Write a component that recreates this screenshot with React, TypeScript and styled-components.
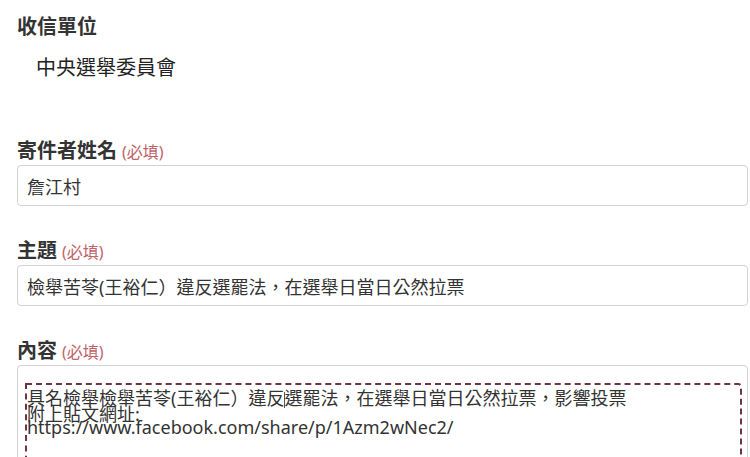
import styled, { createGlobalStyle } from "styled-components";

const GlobalStyle = createGlobalStyle`
  html, body {
    margin: 0;
    padding: 0;
    background: #fff;
    overflow: hidden;
  }
  body {
    font-family: "Noto Sans", "Noto Sans CJK TC", sans-serif;
    color: #222;
  }
`;

const Page = styled.div`
  padding: 13px 2px 0 17px;
  width: 750px;
  box-sizing: border-box;
`;

const SectionTitle = styled.h2`
  margin: 0;
  font-size: 20px;
  line-height: 28px;
  font-weight: 700;
  color: #333;
`;

const Recipient = styled.p`
  margin: 13px 0 0 19px;
  font-size: 20px;
  line-height: 28px;
  color: #222;
`;

const Field = styled.div<{ $gap: number }>`
  margin-top: ${({ $gap }) => $gap}px;
  display: flex;
  flex-direction: column;
`;

const Label = styled.label`
  display: flex;
  align-items: baseline;
  font-size: 20px;
  line-height: 26px;
  font-weight: 700;
  color: #333;
`;

const Required = styled.span`
  margin-left: 5px;
  font-size: 16px;
  font-weight: 400;
  color: #c0646a;
`;

const TextInput = styled.div`
  height: 41px;
  box-sizing: border-box;
  border: 1px solid #d2d2d2;
  border-radius: 4px;
  padding: 0 9px;
  display: flex;
  align-items: center;
  font-size: 18px;
  color: #333;
`;

const TextArea = styled.div`
  height: 120px;
  box-sizing: border-box;
  border: 1px solid #d2d2d2;
  border-radius: 4px;
  padding: 17px 5px 0 7px;
`;

const EditZone = styled.div`
  height: 100%;
  border: 2px dashed #6e3446;
  border-bottom: none;
  border-top-right-radius: 4px;
  padding: 7px 0 0 0;
  font-size: 18px;
  line-height: 13px;
  color: #333;
`;

const Line = styled.div`
  white-space: nowrap;
`;

const Caret = styled.span`
  display: inline-block;
  width: 1px;
  height: 16px;
  margin-right: -1px;
  background: #555;
  vertical-align: -3px;
`;

export default function App() {
  return (
    <>
      <GlobalStyle />
      <Page>
        <SectionTitle>收信單位</SectionTitle>
        <Recipient>中央選舉委員會</Recipient>

        <Field $gap={56}>
          <Label>
            寄件者姓名<Required>(必填)</Required>
          </Label>
          <TextInput>詹江村</TextInput>
        </Field>

        <Field $gap={32}>
          <Label>
            主題<Required>(必填)</Required>
          </Label>
          <TextInput>檢舉苦苓(王裕仁）違反選罷法，在選舉日當日公然拉票</TextInput>
        </Field>

        <Field $gap={32}>
          <Label>
            內容<Required>(必填)</Required>
          </Label>
          <TextArea>
            <EditZone>
              <Line>
                具名檢舉檢舉苦苓(王裕仁）違反
                <Caret />
                選罷法，在選舉日當日公然拉票，影響投票
              </Line>
              <Line>附上貼文網址:</Line>
              <Line>https://www.facebook.com/share/p/1Azm2wNec2/</Line>
            </EditZone>
          </TextArea>
        </Field>
      </Page>
    </>
  );
}
